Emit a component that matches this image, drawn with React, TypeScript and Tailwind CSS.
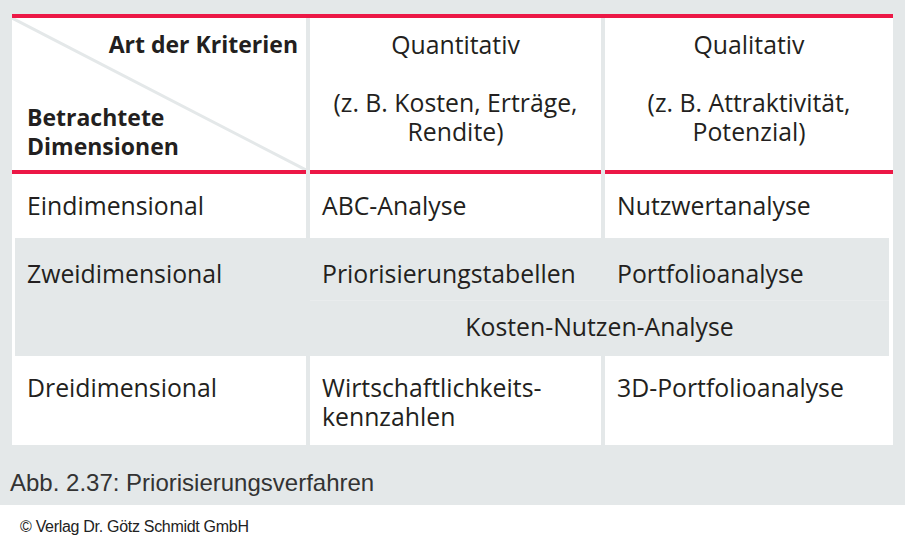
const font = { fontFamily: '"Open Sans", "Noto Sans", sans-serif' };

const App = () => {
  return (
    <div className="w-[905px] h-[536px] bg-white">
      <div className="h-[505px] bg-[#e4e8e9] pl-[12px] pt-[14px]">
        <div
          className="w-[881px] border-t-[4px] border-[#ec1846] text-[#231f20] text-[24.8px] leading-[29px]"
          style={font}
        >
          {/* Kopfzeile */}
          <div className="grid grid-cols-[294px_291px_288px] gap-x-[4px] bg-[#e4e8e9]">
            <div className="relative h-[156px] bg-white border-b-[4px] border-[#ec1846]">
              <svg className="absolute inset-0 h-full w-full" preserveAspectRatio="none" viewBox="0 0 100 100">
                <line x1="0" y1="0" x2="100" y2="100" stroke="#e4e8e9" strokeWidth="3" vectorEffect="non-scaling-stroke" />
              </svg>
              <div className="relative flex h-full flex-col justify-between pb-[9px] pt-[12px] text-[23px] font-bold">
                <div className="pr-[8px] text-right">Art der Kriterien</div>
                <div className="pl-[15px]">
                  Betrachtete
                  <br />
                  Dimensionen
                </div>
              </div>
            </div>
            <div className="h-[156px] bg-white border-b-[4px] border-[#ec1846] pt-[12px] text-center">
              Quantitativ
              <br />
              <br />
              (z. B. Kosten, Erträge,
              <br />
              Rendite)
            </div>
            <div className="h-[156px] bg-white border-b-[4px] border-[#ec1846] pt-[12px] text-center">
              Qualitativ
              <br />
              <br />
              (z. B. Attraktivität,
              <br />
              Potenzial)
            </div>
          </div>

          {/* Eindimensional */}
          <div className="grid grid-cols-[294px_291px_288px] gap-x-[4px] bg-[#e4e8e9]">
            <div className="h-[64px] bg-white pl-[15px] pt-[17px]">Eindimensional</div>
            <div className="h-[64px] bg-white pl-[12px] pt-[17px]">ABC-Analyse</div>
            <div className="h-[64px] bg-white pl-[12px] pt-[17px]">Nutzwertanalyse</div>
          </div>

          {/* Zweidimensional */}
          <div className="bg-white pl-[3px] pr-[4px]">
            <div className="grid h-[118px] grid-cols-[291px_291px_284px] grid-rows-[62px_56px] gap-x-[4px] bg-[#e4e8e9]">
              <div className="row-span-2 pl-[12px] pt-[21px]">Zweidimensional</div>
              <div className="pl-[12px] pt-[21px]">Priorisierungstabellen</div>
              <div className="pl-[12px] pt-[21px]">Portfolioanalyse</div>
              <div className="col-span-2 border-t border-[#e9eced] pt-[11px] text-center">Kosten-Nutzen-Analyse</div>
            </div>
          </div>

          {/* Dreidimensional */}
          <div className="grid grid-cols-[294px_291px_288px] gap-x-[4px] bg-[#e4e8e9]">
            <div className="h-[89px] bg-white pl-[15px] pt-[17px]">Dreidimensional</div>
            <div className="h-[89px] bg-white pl-[12px] pt-[17px]">
              Wirtschaftlichkeits-
              <br />
              kennzahlen
            </div>
            <div className="h-[89px] bg-white pl-[12px] pt-[17px]">3D-Portfolioanalyse</div>
          </div>
        </div>

        <p
          className="-ml-[2px] mt-[24px] text-[24px] leading-[28px] text-[#333333]"
          style={{ fontFamily: '"Liberation Sans", Arial, sans-serif' }}
        >
          Abb. 2.37: Priorisierungsverfahren
        </p>
      </div>
      <p
        className="pl-[20px] pt-[13px] text-[16px] leading-[18px] tracking-[-0.3px] text-[#222222]"
        style={{ fontFamily: '"Liberation Sans", Arial, sans-serif' }}
      >
        © Verlag Dr. Götz Schmidt GmbH
      </p>
    </div>
  );
};

export default App;
